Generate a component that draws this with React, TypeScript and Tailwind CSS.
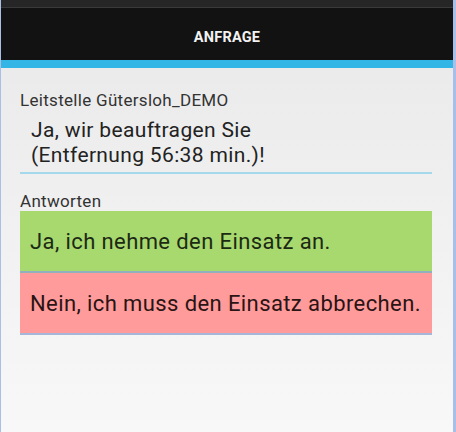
import React from 'react';

const App: React.FC = () => {
  return (
    <div
      className="flex h-[432px] w-[456px] overflow-hidden bg-[#a9bfe9]"
      style={{ fontFamily: 'Roboto, "Noto Sans", sans-serif' }}
    >
      <div className="ml-[1px] mr-[3px] flex flex-1 flex-col">
        {/* Status bar */}
        <div className="h-[8px] bg-[#262626] border-b border-[#3a3a3a]" />
        {/* Action bar */}
        <div className="flex h-[52px] items-center justify-center bg-[#121212] pt-[8px]">
          <span className="text-[14.5px] font-bold tracking-[0.2px] text-[#f2f2f2]">ANFRAGE</span>
        </div>
        <div className="h-[8px] bg-[#33b5e5]" />

        {/* Content */}
        <div className="flex flex-1 flex-col bg-gradient-to-b from-[#ebebeb] to-[#f8f8f8] pl-[19px] pr-[21px] pt-[22px]">
          <div className="text-[17px] leading-[20px] tracking-[0.3px] text-[#333]">Leitstelle Gütersloh_DEMO</div>
          <div className="mt-[8px] border-b-2 border-[#a3d9ea] pb-[4px] pl-[11px] text-[21px] leading-[25px] tracking-[0.35px] text-[#222]">
            Ja, wir beauftragen Sie
            <br />
            (Entfernung 56:38 min.)!
          </div>

          <div className="mt-[17px] text-[17px] leading-[20px] tracking-[0.3px] text-[#333]">Antworten</div>
          <div className="flex flex-col">
            <button className="flex h-[62px] items-center border-b-2 border-[#8fb0bc] bg-[#a8d96f] pl-[10px] text-left text-[22px] tracking-[0.4px] text-[#1c2a14]">
              Ja, ich nehme den Einsatz an.
            </button>
            <button className="flex h-[62px] items-center border-b-2 border-[#a5b6d8] bg-[#ff9b9b] pl-[10px] text-left text-[22px] tracking-[0.4px] text-[#2a1414]">
              Nein, ich muss den Einsatz abbrechen.
            </button>
          </div>
        </div>
      </div>
    </div>
  );
};

export default App;
